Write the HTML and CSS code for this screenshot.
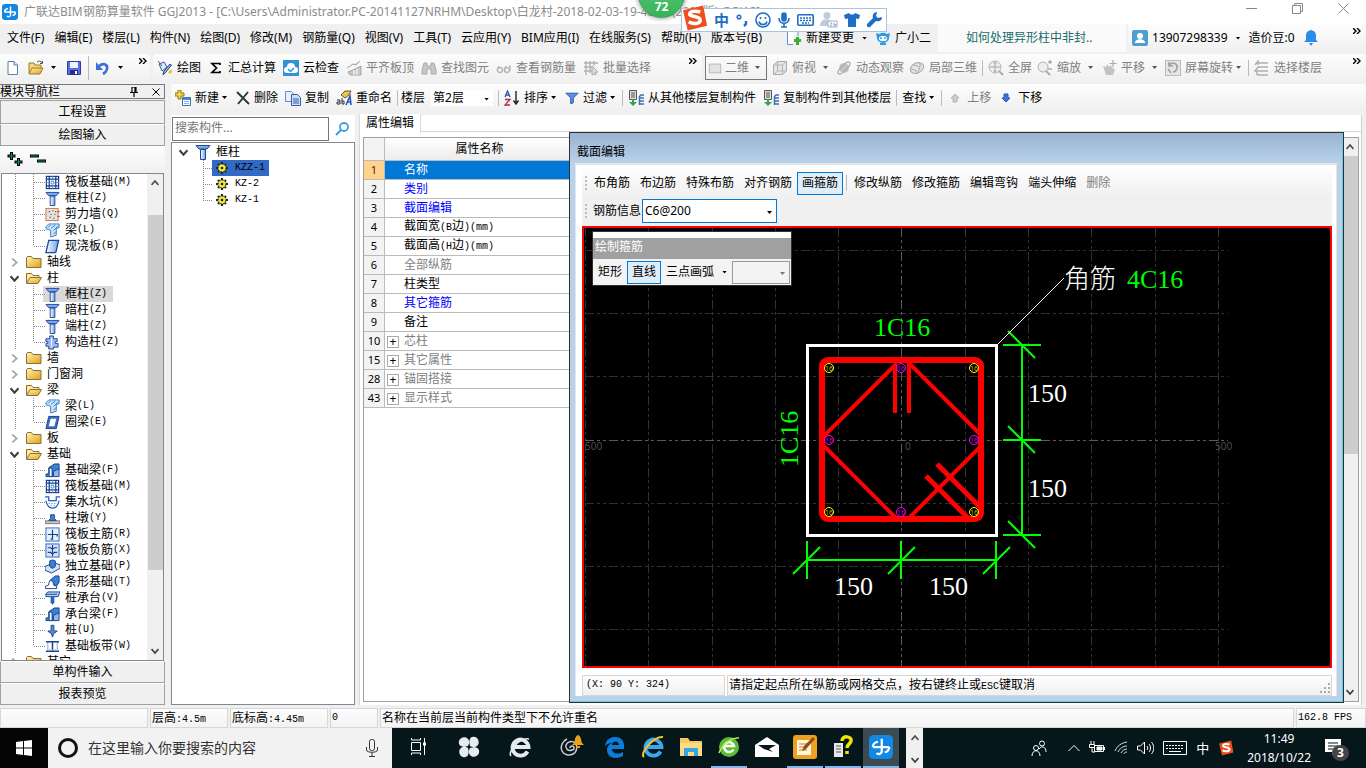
FILE: index.html
```
<!DOCTYPE html>
<html lang="zh-CN">
<head>
    <meta charset="UTF-8">
    <meta name="viewport" content="width=device-width, initial-scale=1.0">
    <title>广联达BIM钢筋算量软件 GGJ2013</title>
    <link rel="stylesheet" href="styles.css">
</head>
<body>
    <svg class="sprite" aria-hidden="true">
        <defs>
            <linearGradient id="g-gold" x1="0" y1="0" x2="1" y2="1"><stop offset="0" stop-color="#fff3b0"/><stop offset="1" stop-color="#e0a01c"/></linearGradient>
            <linearGradient id="g-blue" x1="0" y1="0" x2="1" y2="0"><stop offset="0" stop-color="#fff"/><stop offset="1" stop-color="#6f9fe8"/></linearGradient>
        </defs>
        <symbol id="i-app" viewBox="0 0 16 16"><rect width="16" height="16" rx="3" fill="#1088e4"/><path d="M8.500 2.500v8.500a2 2 0 0 1-3.500 1M2.500 8h11M6 4.500A4 4 0 0 0 2.500 8M13.500 8a3.500 3.500 0 0 1-3 3.500" fill="none" stroke="#fff" stroke-width="1.500"/></symbol>
        <symbol id="i-more" viewBox="0 0 8 6"><path d="M0 0l3 3-3 3M4 0l3 3-3 3" fill="none" stroke="#000" stroke-width="1.400"/></symbol>
        <symbol id="i-new" viewBox="0 0 16 16"><path d="M3 1.500h6l3.500 3.500v9.500H3z" fill="#fff" stroke="#5f7fb0"/><path d="M9 1.500V5h3.500" fill="#dbe6f8" stroke="#5f7fb0"/></symbol>
        <symbol id="i-open" viewBox="0 0 16 16"><path d="M1 13V3h5l1 2h6v3" fill="#f5d77a" stroke="#9a7a24"/><path d="M1 14l3-6h11l-3 6z" fill="url(#g-gold)" stroke="#9a7a24"/><path d="M9 2c2-1.500 4-1 5 1M14.500 1v2.500H12" fill="none" stroke="#555"/></symbol>
        <symbol id="i-save" viewBox="0 0 16 16"><path d="M1.500 1.500h13v13h-13z" fill="#5a6fe0" stroke="#2b3a9c"/><path d="M4 2h8v6H4z" fill="#eef3ff"/><path d="M4 10h8v5H4z" fill="#27308a"/><path d="M9 11h2v3H9z" fill="#fff"/></symbol>
        <symbol id="i-undo" viewBox="0 0 16 16"><path d="M4 6c5-4 9-1 8 3-.5 2-2 4-4 5" fill="none" stroke="#3d6fd6" stroke-width="2.600"/><path d="M1 2v8h7z" fill="#3d6fd6"/></symbol>
        <symbol id="i-draw" viewBox="0 0 16 16"><path d="M2 4l5-2 3 5-5 4z" fill="#dbe9fb" stroke="#395f95"/><path d="M1 1l4 5" stroke="#395f95"/><path d="M14.500 5L9 12l-3 3 1-4 6-7z" fill="#8fb0da" stroke="#2b4a7c"/><path d="M11 13c1-3 3-4 4-3 .5 2-1 5-4 3z" fill="#f0c23a"/></symbol>
        <symbol id="i-sum" viewBox="0 0 12 16"><path d="M10 5V3.500H2L6.500 8 2 12.500h8V11" fill="none" stroke="#000" stroke-width="1.700"/></symbol>
        <symbol id="i-cloud" viewBox="0 0 16 16"><rect width="16" height="16" fill="#2f93d8"/><path d="M4 13a3 3 0 0 1 0-6 4 4 0 0 1 8 0 3 3 0 0 1 0 6z" fill="#fff"/><path d="M5 9l2.500 2.500L11 8" fill="none" stroke="#2f93d8" stroke-width="1.500"/></symbol>
        <symbol id="i-align" viewBox="0 0 16 16"><path d="M1 8l6-4 3 1 4-4M2 12l7-3 6-3v9H4z" fill="#c9c9c9" stroke="#a5a5a5"/><path d="M8 10v5M11 9v6" stroke="#fff"/></symbol>
        <symbol id="i-find" viewBox="0 0 16 16"><path d="M3 3h3v3h4V3h3l2 7v4h-5V9H6v5H1v-4z" fill="#c6c6c6" stroke="#aaa"/></symbol>
        <symbol id="i-glass" viewBox="0 0 16 16"><path d="M1 11l2-5M8 11l2-5M14 5v6" stroke="#b5b5b5" stroke-width="1.300"/><circle cx="4" cy="10" r="2.500" fill="none" stroke="#b5b5b5" stroke-width="1.400"/><circle cx="11" cy="10" r="2.500" fill="none" stroke="#b5b5b5" stroke-width="1.400"/></symbol>
        <symbol id="i-batch" viewBox="0 0 16 16"><path d="M1 3h14M1 7h9M1 11h8M3 1v14M7 1v12M11 1v5" stroke="#b0b0b0" stroke-width="1.300"/><path d="M9 6l6 6-3 .5 1 2.500-2-1-2 1z" fill="#ddd" stroke="#aaa"/></symbol>
        <symbol id="i-flat" viewBox="0 0 16 16"><rect x="1.500" y="3.500" width="13" height="10" fill="#e3e3e3" stroke="#b4b4b4"/></symbol>
        <symbol id="i-cube" viewBox="0 0 16 16"><path d="M1.500 5l4-3.500h9V11l-4 3.500h-9z" fill="#e6e6e6" stroke="#aaa"/><path d="M1.500 5h9v9.500M10.500 5l4-3.500M5.500 2v9h9M5.500 11l-4 3.500" fill="none" stroke="#b4b4b4"/></symbol>
        <symbol id="i-orbit" viewBox="0 0 16 16"><circle cx="8" cy="8" r="5" fill="#c2c2c2"/><ellipse cx="8" cy="8" rx="8" ry="2.600" transform="rotate(-45 8 8)" fill="none" stroke="#aaa" stroke-width="1.300"/></symbol>
        <symbol id="i-part" viewBox="0 0 16 16"><ellipse cx="8" cy="8" rx="7" ry="5" transform="rotate(-25 8 8)" fill="#e4e4e4" stroke="#aaa"/><path d="M5 5l6 2-2 5M2 9l4 1 2 3M9 3l4 3" fill="none" stroke="#aaa"/></symbol>
        <symbol id="i-full" viewBox="0 0 16 16"><circle cx="7" cy="7" r="6" fill="#eee" stroke="#b0b0b0"/><path d="M7 2v10M2 7h10M5.500 3.500L7 2l1.500 1.500M5.500 10.500L7 12l1.500-1.500" fill="none" stroke="#a5a5a5"/><path d="M11 11l4 4" stroke="#aaa" stroke-width="2"/></symbol>
        <symbol id="i-zoom" viewBox="0 0 16 16"><circle cx="6" cy="7" r="5" fill="#eee" stroke="#b0b0b0"/><path d="M9 11l4 4" stroke="#aaa" stroke-width="2"/><path d="M11 2h4M13 0v4M11 9h4" stroke="#aaa" stroke-width="1.300"/></symbol>
        <symbol id="i-pan" viewBox="0 0 16 16"><path d="M2 6l3 1 1-3 2 3 2-2 1 3 3 1-2 6H5z" fill="#c2c2c2"/><path d="M12 0v7M8.500 3.500h7" stroke="#aaa" stroke-width="1.200"/></symbol>
        <symbol id="i-rot" viewBox="0 0 16 16"><rect x=".5" y=".5" width="15" height="15" fill="#e6e6e6" stroke="#bbb"/><path d="M4 5c4-4 9-1 8 3-.5 2-2 4-4 4M4 2v4h4M3 9l3 4" fill="none" stroke="#a2a2a2" stroke-width="1.700"/></symbol>
        <symbol id="i-floor" viewBox="0 0 16 16"><path d="M1 5l3-4v4M4 3h10M4 7h10M2 11h12M3 15h11M4 7l-3 4h2v4" fill="none" stroke="#b0b0b0" stroke-width="1.500"/></symbol>
        <symbol id="i-add" viewBox="0 0 16 16"><path d="M3 0h3v3h3v3H6v3H3V6H0V3h3z" fill="#f2d44c" stroke="#8d7514"/><path d="M7.500 7.500h8v8h-8z" fill="#fff" stroke="#4670b8"/><path d="M8 8h7v2H8z" fill="#4d86e0"/><path d="M9 11.500h5M9 13.500h5" stroke="#8fb0e8"/></symbol>
        <symbol id="i-del" viewBox="0 0 14 16"><path d="M1 2l12 12M12 2L2 14" stroke="#333" stroke-width="1.900"/></symbol>
        <symbol id="i-copy" viewBox="0 0 16 16"><path d="M.5 1.500h6l2 2v8h-8z" fill="#e9f0fd" stroke="#6d8cc4"/><path d="M6.500 4.500h6l3 3v8h-9z" fill="#cfdff9" stroke="#355ea8"/><path d="M8 9h6M8 11h6M8 13h6" stroke="#355ea8"/></symbol>
        <symbol id="i-ren" viewBox="0 0 16 16"><path d="M5 5l4-4h6l-2 4-4 3z" fill="#e8c25b" stroke="#6d5720"/><path d="M10 15l4-9 1 9M11 12h4" fill="none" stroke="#2459b8" stroke-width="1.600"/><path d="M1 10h3v4H1v-2h3M6 8v6h2v-3H6" fill="none" stroke="#333"/></symbol>
        <symbol id="i-sort" viewBox="0 0 16 16"><path d="M1 7l2.500-6L6 7M2 5h3" fill="none" stroke="#2d55a5" stroke-width="1.300"/><path d="M1 9.500h5L1 15h5" fill="none" stroke="#b03040" stroke-width="1.300"/><path d="M12 1v12M9.500 10.500L12 14l2.500-3.500" fill="none" stroke="#222" stroke-width="1.400"/></symbol>
        <symbol id="i-filter" viewBox="0 0 16 16"><path d="M1 2.500h14L9.500 8v5.500l-3 1V8z" fill="#5c8ee6" stroke="#2451a8"/></symbol>
        <symbol id="i-cpfl" viewBox="0 0 16 16"><path d="M1.500.5h7v9h-7z" fill="#ddd" stroke="#555"/><path d="M3 3h4M3 5h4M3 7h4" stroke="#555"/><path d="M16 5h-3l-2 2M16 8h-4M16 11h-4M16 14h-4M11.500 6v9" fill="none" stroke="#3f6fb5" stroke-width="1.500"/><path d="M4 9v3H1l4 4 4-4H6V9z" fill="#36a04c"/></symbol>
        <symbol id="i-up" viewBox="0 0 12 16"><path d="M6 4l4 4H8v4H4V8H2z" fill="#ccc" stroke="#b4b4b4"/></symbol>
        <symbol id="i-down" viewBox="0 0 12 16"><path d="M6 12L2 8h2V4h4v4h2z" fill="#3f74dd" stroke="#2852ab"/></symbol>
        <symbol id="i-doc" viewBox="0 0 16 16"><path d="M9 1.500H1.500v13H7M9 1.500h3V6" fill="#fff" stroke="#4f96d2"/><path d="M10 7h3v2h2v3h-2v3h-3v-3H8V9h2z" fill="#3fae2a"/></symbol>
        <symbol id="i-robot" viewBox="0 0 16 16"><path d="M1 3l3 1a7 6 0 0 1 8 0l3-1-1 5a6 5 0 0 1-12 0z" fill="#2c9be6"/><rect x="4" y="6" width="8" height="5" rx="2.500" fill="#fff"/><path d="M6 7v2M10 7v2" stroke="#2c9be6" stroke-width="1.400"/><path d="M5 14h6" stroke="#2c9be6" stroke-width="2"/></symbol>
        <symbol id="i-user" viewBox="0 0 16 16"><rect width="16" height="16" rx="2" fill="#4d9fd0"/><circle cx="8" cy="6" r="3" fill="#fff"/><path d="M3 13c0-5 10-5 10 0z" fill="#fff"/></symbol>
        <symbol id="i-bell" viewBox="0 0 14 16"><path d="M7 0c4 1 5 3 5 6v4l2 2H0l2-2V6c0-3 1-5 5-6zM5 13h4l-2 3z" fill="#2b8bea"/></symbol>
        <symbol id="i-loupe" viewBox="0 0 16 16"><circle cx="10" cy="6" r="4" fill="#fff" stroke="#3fa0e6" stroke-width="1.800"/><path d="M7 9l-5 5" stroke="#3fa0e6" stroke-width="2.200"/></symbol>
        <symbol id="i-pin" viewBox="0 0 8 10"><path d="M2 0h4v5M2 0v5M5 0v5M0 5.500h8M4 6v4" fill="none" stroke="#000" stroke-width="1.200"/></symbol>
        <symbol id="i-x" viewBox="0 0 8 8"><path d="M.5.5l7 7M7.500.5l-7 7" stroke="#000"/></symbol>
        <symbol id="i-plus2" viewBox="0 0 16 16"><path d="M4.500 1v8M.5 5h8M11.500 7v8M7.500 11h8" stroke="#000" stroke-width="3"/><path d="M4.500 2v6M1.500 5h6M11.500 8v6M8.500 11h6" stroke="#0b8a80" stroke-width="1"/></symbol>
        <symbol id="i-minus2" viewBox="0 0 16 16"><path d="M0 5h9M7 10h9" stroke="#000" stroke-width="3"/><path d="M1 5h7M8 10h7" stroke="#0b8a80"/></symbol>
        <symbol id="i-chev" viewBox="0 0 8 8"><path d="M.5 2l3.500 4 3.500-4" fill="none" stroke="#404040" stroke-width="1.800"/></symbol>
        <symbol id="i-chevr" viewBox="0 0 8 8"><path d="M2 .5L6 4 2 7.500" fill="none" stroke="#a6a6a6" stroke-width="1.500"/></symbol>
        <symbol id="i-chevu" viewBox="0 0 8 8"><path d="M.5 6L4 2l3.500 4" fill="none" stroke="#505050" stroke-width="1.800"/></symbol>
        <symbol id="i-dir" viewBox="0 0 16 14"><path d="M.5 12.500v-10l1-1h4l1.500 2h8v9z" fill="url(#g-gold)" stroke="#8d7030"/></symbol>
        <symbol id="i-diro" viewBox="0 0 16 14"><path d="M.5 12V2.500h5l1.500 2h6V7" fill="#fbe9a4" stroke="#8d7030"/><path d="M.5 12.500L4 6.500h11.500l-3.500 6z" fill="url(#g-gold)" stroke="#8d7030"/></symbol>
        <symbol id="i-col" viewBox="0 0 16 16"><path d="M1 1.500h14L12 5H4z" fill="#7ba7ec" stroke="#1c4896"/><path d="M5.500 5.500h5v10h-5z" fill="url(#g-blue)" stroke="#1c4896"/></symbol>
        <symbol id="i-raft" viewBox="0 0 16 16"><rect x="1.500" y="1.500" width="13" height="13" fill="#fff" stroke="#14428c" stroke-width="1.300"/><path d="M4.500 1v14M11.500 1v14M1 4.500h14M1 11.500h14" fill="none" stroke="#14428c" stroke-width="1.300"/><path d="M6.500 6.500h3v3h-3zM8 1v3M8 12v3M1 8h3M12 8h3" fill="none" stroke="#5a86cc"/></symbol>
        <symbol id="i-wall" viewBox="0 0 16 16"><rect x="1" y="1.500" width="13" height="13" fill="#e6dfdc" stroke="#c4764a"/><path d="M4 5h1M8 4h1M6 8h1M10 8h1M5 11h1M9 12h1M11 5h1" stroke="#333" stroke-width="1.300"/><path d="M13 5h3M13 10h3" stroke="#c0501c"/></symbol>
        <symbol id="i-beam" viewBox="0 0 16 16"><path d="M1 4l3-3h11v4l-3 1v7l-6 2V8L1 6z" fill="#cfe3fb" stroke="#2f7fc8"/><path d="M3 5l3-3M6 6l5-4M9 8l5-5M9 12l3-3" stroke="#2f7fc8"/></symbol>
        <symbol id="i-slab" viewBox="0 0 16 16"><path d="M4 1.500h10.500l-3 13H1z" fill="url(#g-blue)" stroke="#1c4896" stroke-width="1.400"/></symbol>
        <symbol id="i-ring" viewBox="0 0 16 16"><path d="M4 1.500h11l-3 13H1z" fill="#3b6fc4" stroke="#173c80"/><path d="M6 4h6l-2 8H4z" fill="#fff"/></symbol>
        <symbol id="i-con" viewBox="0 0 16 16"><path d="M5 1h4v3h4v3h-2v2h3v4H9v2H4v-3H1V9h2V7H1V4h4z" fill="#9bbcf0" stroke="#1c4896"/><path d="M7 3v10" stroke="#fff"/></symbol>
        <symbol id="i-fbeam" viewBox="0 0 16 16"><path d="M1 14.500V12l3-1V5l6-4h5v6l-6 2v5.500z" fill="#3d7fd0" stroke="#14428c"/><path d="M4.500 5.500h3v9h-3z" fill="#fff" stroke="#14428c"/><path d="M9 9l6-3v8.500H9z" fill="#8fb6ea" stroke="#14428c"/></symbol>
        <symbol id="i-pit" viewBox="0 0 16 16"><path d="M0 2h4v4h8V2h4M1 6c1 5 3 8 7 8s6-3 7-8" fill="none" stroke="#1f5cb4" stroke-width="1.300"/><path d="M4 9h1M7 9h1M10 9h1M6 11h1M9 11h1" stroke="#1f5cb4"/></symbol>
        <symbol id="i-pier" viewBox="0 0 16 16"><path d="M0 10.500h16v3H0z" fill="#c5c5c5" stroke="#777"/><path d="M4 10l2-2V4h4v4l2 2z" fill="#4b82dd" stroke="#14428c"/></symbol>
        <symbol id="i-mbar" viewBox="0 0 16 16"><rect x="1" y="1" width="14" height="14" fill="#e7f0ff" stroke="#2a62b8"/><path d="M8 3v10H6M3 8h10v2" fill="none" stroke="#14428c" stroke-width="1.300"/></symbol>
        <symbol id="i-nbar" viewBox="0 0 16 16"><rect x="1" y="1" width="14" height="14" fill="#d5e3fa" stroke="#2a62b8"/><path d="M8 2v12M3 5h3l1 1h2l1-1h3M3 10h3l1 1h2l1-1h3" fill="none" stroke="#14428c" stroke-width="1.200"/></symbol>
        <symbol id="i-iso" viewBox="0 0 16 16"><path d="M0 8l9-4 7 2v4l-9 5-7-3z" fill="#cfe0f8" stroke="#14428c"/><path d="M5 2l3-1 3 1v6l-3 2-3-2z" fill="#3d7fd0" stroke="#14428c"/></symbol>
        <symbol id="i-strip" viewBox="0 0 16 16"><path d="M6 8V5l5-4h4v7l-3 4z" fill="#3d7fd0" stroke="#14428c"/><path d="M.5 14.500V12l3-1 1.500-5h3l1.500 5 3 1v2.500z" fill="#fff" stroke="#14428c"/></symbol>
        <symbol id="i-cap" viewBox="0 0 16 16"><path d="M1 3l2-2h13l-2 5H1z" fill="#b9d2f6" stroke="#14428c"/><path d="M1 3.500h12" stroke="#14428c"/><path d="M6 6h4v6l-2 3-2-3z" fill="#2a62b8"/></symbol>
        <symbol id="i-pile" viewBox="0 0 16 16"><path d="M6.500 2.500h3v6h3.500l-2 2h-1.500L8 15l-1.500-4.500H5l-2-2h3.500z" fill="#5c8fdc" stroke="#14428c"/></symbol>
        <symbol id="i-band" viewBox="0 0 16 16"><path d="M1 3h14M1 13h14M8 3v10" stroke="#14428c" stroke-width="1.600"/><path d="M3 4v8M13 4v8" stroke="#14428c" stroke-dasharray="1 1"/><path d="M4 11h8v1H4z" fill="#a9c6f2"/></symbol>
        <symbol id="i-gear" viewBox="0 0 12 12"><path d="M6 0v12M0 6h12M2 2l8 8M10 2l-8 8" stroke="#222" stroke-width="2.200"/><circle cx="6" cy="6" r="4" fill="#f4e83a" stroke="#222" stroke-dasharray="2 1"/><circle cx="6" cy="6" r="1.300" fill="#222"/></symbol>
        <symbol id="i-e" viewBox="0 0 24 24"><path d="M19.500 16.500A8 8 0 1 1 20.500 12H6" fill="none" stroke="currentColor" stroke-width="3.800"/></symbol>
        <symbol id="i-sogou" viewBox="0 0 28 28"><path d="M2 6L23 1l4 21-20 5z" fill="#f04e1d"/><path d="M20 8c-5-2-11-1-11 2s11 2 11 6-7 5-12 2" fill="none" stroke="#fff" stroke-width="3.600"/></symbol>
    </svg>

    <div class="app">
        <header class="titlebar">
            <svg class="ico"><use href="#i-app"/></svg>
            <h1>广联达BIM钢筋算量软件 GGJ2013 - [C:\Users\Administrator.PC-20141127NRHM\Desktop\白龙村-2018-02-03-19-48-12(2000版).GGJ12]</h1>
            <div class="winbtns">
                <button aria-label="最小化"><svg width="11" height="11"><path d="M0 5.500h11" stroke="#888"/></svg></button>
                <button aria-label="还原"><svg width="11" height="11" fill="none" stroke="#888"><path d="M.5 2.500h8v8h-8zM2.500 2.500v-2h8v8h-2"/></svg></button>
                <button aria-label="关闭"><svg width="11" height="11" stroke="#888"><path d="M.5.5l10 10M10.500.5l-10 10"/></svg></button>
            </div>
        </header>

        <nav class="menubar">
            <button>文件(F)</button><button>编辑(E)</button><button>楼层(L)</button><button>构件(N)</button><button>绘图(D)</button><button>修改(M)</button><button>钢筋量(Q)</button><button>视图(V)</button><button>工具(T)</button><button>云应用(Y)</button><button>BIM应用(I)</button><button>在线服务(S)</button><button>帮助(H)</button><button>版本号(B)</button>
            <button class="tool"><svg class="ico"><use href="#i-doc"/></svg>新建变更<span class="arr"></span></button>
            <button class="tool"><svg class="ico"><use href="#i-robot"/></svg>广小二</button>
            <a class="tip" href="#">如何处理异形柱中非封..</a>
            <div class="account">
                <button class="tool"><svg class="ico"><use href="#i-user"/></svg>13907298339<span class="arr"></span></button>
                <button class="tool beans">造价豆:0<svg class="ico"><use href="#i-bell"/></svg></button>
                <svg class="more"><use href="#i-more"/></svg>
            </div>
        </nav>

        <div class="bars">
            <div class="bar bar-file">
                <button class="tool" aria-label="新建"><svg class="ico"><use href="#i-new"/></svg></button>
                <button class="tool" aria-label="打开"><svg class="ico"><use href="#i-open"/></svg><span class="arr"></span></button>
                <button class="tool" aria-label="保存"><svg class="ico"><use href="#i-save"/></svg></button>
                <span class="sep tall"></span>
                <button class="tool" aria-label="撤销"><svg class="ico"><use href="#i-undo"/></svg><span class="arr"></span></button>
                <svg class="more"><use href="#i-more"/></svg>
            </div>
            <div class="bar bar-draw">
                <button class="tool"><svg class="ico"><use href="#i-draw"/></svg>绘图</button>
                <button class="tool"><svg class="ico"><use href="#i-sum"/></svg>汇总计算</button>
                <button class="tool"><svg class="ico"><use href="#i-cloud"/></svg>云检查</button>
                <button class="tool off"><svg class="ico"><use href="#i-align"/></svg>平齐板顶</button>
                <button class="tool off"><svg class="ico"><use href="#i-find"/></svg>查找图元</button>
                <button class="tool off"><svg class="ico"><use href="#i-glass"/></svg>查看钢筋量</button>
                <button class="tool off"><svg class="ico"><use href="#i-batch"/></svg>批量选择</button>
                <svg class="more"><use href="#i-more"/></svg>
            </div>
            <div class="bar bar-view">
                <button class="tool off mode"><svg class="ico"><use href="#i-flat"/></svg>二维<span class="arr"></span></button>
                <button class="tool off"><svg class="ico"><use href="#i-cube"/></svg>俯视<span class="arr"></span></button>
                <button class="tool off"><svg class="ico"><use href="#i-orbit"/></svg>动态观察</button>
                <button class="tool off"><svg class="ico"><use href="#i-part"/></svg>局部三维</button>
                <span class="sep"></span>
                <button class="tool off"><svg class="ico"><use href="#i-full"/></svg>全屏</button>
                <button class="tool off"><svg class="ico"><use href="#i-zoom"/></svg>缩放<span class="arr"></span></button>
                <button class="tool off"><svg class="ico"><use href="#i-pan"/></svg>平移<span class="arr"></span></button>
                <button class="tool off"><svg class="ico"><use href="#i-rot"/></svg>屏幕旋转<span class="arr near"></span></button>
                <span class="sep"></span>
                <button class="tool off"><svg class="ico"><use href="#i-floor"/></svg>选择楼层</button>
                <svg class="more"><use href="#i-more"/></svg>
            </div>
        </div>

        <div class="main">
            <aside class="nav">
                <div class="nav-head"><h2>模块导航栏</h2><svg width="8" height="10"><use href="#i-pin"/></svg><svg width="8" height="8"><use href="#i-x"/></svg></div>
                <button class="page">工程设置</button>
                <button class="page">绘图输入</button>
                <div class="nav-tools">
                    <button aria-label="全部展开"><svg class="ico"><use href="#i-plus2"/></svg></button>
                    <button aria-label="全部折叠"><svg class="ico"><use href="#i-minus2"/></svg></button>
                </div>
                <div class="treebox">
                    <ul class="tree">
                        <li>
                            <ul class="sub">
                                <li><svg><use href="#i-raft"/></svg>筏板基础<span class="key">(M)</span></li>
                                <li><svg><use href="#i-col"/></svg>框柱<span class="key">(Z)</span></li>
                                <li><svg><use href="#i-wall"/></svg>剪力墙<span class="key">(Q)</span></li>
                                <li><svg><use href="#i-beam"/></svg>梁<span class="key">(L)</span></li>
                                <li><svg><use href="#i-slab"/></svg>现浇板<span class="key">(B)</span></li>
                            </ul>
                        </li>
                        <li><div class="group"><svg class="chev"><use href="#i-chevr"/></svg><svg class="dir"><use href="#i-dir"/></svg>轴线</div></li>
                        <li><div class="group"><svg class="chev"><use href="#i-chev"/></svg><svg class="dir"><use href="#i-diro"/></svg>柱</div>
                            <ul class="sub">
                                <li class="on"><svg><use href="#i-col"/></svg>框柱<span class="key">(Z)</span></li>
                                <li><svg><use href="#i-col"/></svg>暗柱<span class="key">(Z)</span></li>
                                <li><svg><use href="#i-col"/></svg>端柱<span class="key">(Z)</span></li>
                                <li><svg><use href="#i-con"/></svg>构造柱<span class="key">(Z)</span></li>
                            </ul>
                        </li>
                        <li><div class="group"><svg class="chev"><use href="#i-chevr"/></svg><svg class="dir"><use href="#i-dir"/></svg>墙</div></li>
                        <li><div class="group"><svg class="chev"><use href="#i-chevr"/></svg><svg class="dir"><use href="#i-dir"/></svg>门窗洞</div></li>
                        <li><div class="group"><svg class="chev"><use href="#i-chev"/></svg><svg class="dir"><use href="#i-diro"/></svg>梁</div>
                            <ul class="sub">
                                <li><svg><use href="#i-beam"/></svg>梁<span class="key">(L)</span></li>
                                <li><svg><use href="#i-ring"/></svg>圈梁<span class="key">(E)</span></li>
                            </ul>
                        </li>
                        <li><div class="group"><svg class="chev"><use href="#i-chevr"/></svg><svg class="dir"><use href="#i-dir"/></svg>板</div></li>
                        <li><div class="group"><svg class="chev"><use href="#i-chev"/></svg><svg class="dir"><use href="#i-diro"/></svg>基础</div>
                            <ul class="sub">
                                <li><svg><use href="#i-fbeam"/></svg>基础梁<span class="key">(F)</span></li>
                                <li><svg><use href="#i-raft"/></svg>筏板基础<span class="key">(M)</span></li>
                                <li><svg><use href="#i-pit"/></svg>集水坑<span class="key">(K)</span></li>
                                <li><svg><use href="#i-pier"/></svg>柱墩<span class="key">(Y)</span></li>
                                <li><svg><use href="#i-mbar"/></svg>筏板主筋<span class="key">(R)</span></li>
                                <li><svg><use href="#i-nbar"/></svg>筏板负筋<span class="key">(X)</span></li>
                                <li><svg><use href="#i-iso"/></svg>独立基础<span class="key">(P)</span></li>
                                <li><svg><use href="#i-strip"/></svg>条形基础<span class="key">(T)</span></li>
                                <li><svg><use href="#i-cap"/></svg>桩承台<span class="key">(V)</span></li>
                                <li><svg><use href="#i-fbeam"/></svg>承台梁<span class="key">(F)</span></li>
                                <li><svg><use href="#i-pile"/></svg>桩<span class="key">(U)</span></li>
                                <li><svg><use href="#i-band"/></svg>基础板带<span class="key">(W)</span></li>
                            </ul>
                        </li>
                        <li><div class="group"><svg class="chev"><use href="#i-chevr"/></svg><svg class="dir"><use href="#i-dir"/></svg>其它</div></li>
                    </ul>
                    <div class="scroll nav-scroll"><svg><use href="#i-chevu"/></svg><i></i><svg><use href="#i-chev"/></svg></div>
                </div>
                <button class="page">单构件输入</button>
                <button class="page">报表预览</button>
            </aside>

            <div class="work">
                <div class="bar bar-comp">
                    <button class="tool"><svg class="ico"><use href="#i-add"/></svg>新建<span class="arr near"></span></button>
                    <button class="tool"><svg class="ico slim"><use href="#i-del"/></svg>删除</button>
                    <button class="tool"><svg class="ico"><use href="#i-copy"/></svg>复制</button>
                    <button class="tool"><svg class="ico"><use href="#i-ren"/></svg>重命名</button>
                    <span class="sep"></span>
                    <label class="floor">楼层 <span class="combo"><select><option>第2层</option></select></span></label>
                    <span class="sep"></span>
                    <button class="tool"><svg class="ico"><use href="#i-sort"/></svg>排序<span class="arr near"></span></button>
                    <button class="tool"><svg class="ico slim"><use href="#i-filter"/></svg>过滤<span class="arr near"></span></button>
                    <span class="sep"></span>
                    <button class="tool"><svg class="ico"><use href="#i-cpfl"/></svg>从其他楼层复制构件</button>
                    <button class="tool"><svg class="ico"><use href="#i-cpfl"/></svg>复制构件到其他楼层</button>
                    <span class="sep"></span>
                    <button class="tool">查找<span class="arr near"></span></button>
                    <span class="sep"></span>
                    <button class="tool off"><svg class="ico"><use href="#i-up"/></svg>上移</button>
                    <button class="tool"><svg class="ico"><use href="#i-down"/></svg>下移</button>
                </div>
                <div class="panes">
                    <section class="comps">
                        <div class="search"><input type="text" placeholder="搜索构件..." aria-label="搜索构件"><button aria-label="搜索"><svg class="ico"><use href="#i-loupe"/></svg></button></div>
                        <div class="complist">
                            <div class="root"><svg class="chev"><use href="#i-chev"/></svg><svg class="ico"><use href="#i-col"/></svg>框柱</div>
                            <ul>
                                <li class="on"><span><svg><use href="#i-gear"/></svg>KZZ-1</span></li>
                                <li><span><svg><use href="#i-gear"/></svg>KZ-2</span></li>
                                <li><span><svg><use href="#i-gear"/></svg>KZ-1</span></li>
                            </ul>
                        </div>
                    </section>

                    <section class="props">
                        <div class="tabs"><button>属性编辑</button></div>
                        <div class="propbox">
                            <div class="grid">
                                <table>
                                    <thead><tr><th></th><th>属性名称</th><th></th></tr></thead>
                                    <tbody>
                                        <tr class="sel"><td>1</td><td>名称</td><td></td></tr>
                                        <tr class="blue"><td>2</td><td>类别</td><td></td></tr>
                                        <tr class="blue"><td>3</td><td>截面编辑</td><td></td></tr>
                                        <tr><td>4</td><td>截面宽<span class="key">(B</span>边<span class="key">)(mm)</span></td><td></td></tr>
                                        <tr><td>5</td><td>截面高<span class="key">(H</span>边<span class="key">)(mm)</span></td><td></td></tr>
                                        <tr class="gray"><td>6</td><td>全部纵筋</td><td></td></tr>
                                        <tr><td>7</td><td>柱类型</td><td></td></tr>
                                        <tr class="blue"><td>8</td><td>其它箍筋</td><td></td></tr>
                                        <tr><td>9</td><td>备注</td><td></td></tr>
                                        <tr class="gray fold"><td>10</td><td><button>+</button>芯柱</td><td></td></tr>
                                        <tr class="gray fold"><td>15</td><td><button>+</button>其它属性</td><td></td></tr>
                                        <tr class="gray fold"><td>28</td><td><button>+</button>锚固搭接</td><td></td></tr>
                                        <tr class="gray fold"><td>43</td><td><button>+</button>显示样式</td><td></td></tr>
                                    </tbody>
                                </table>
                                <div class="scroll prop-scroll"><svg><use href="#i-chevu"/></svg><i></i><svg><use href="#i-chev"/></svg></div>
                            </div>
                        </div>
                    </section>
                </div>

                <section class="dialog" role="dialog" aria-label="截面编辑">
                    <h2>截面编辑</h2>
                    <div class="dlg-body">
                        <div class="dlg-tools">
                            <div class="dlg-row"><span class="grip"></span><button>布角筋</button><button>布边筋</button><button>特殊布筋</button><button>对齐钢筋</button><button class="on">画箍筋</button><span class="sep"></span><button>修改纵筋</button><button>修改箍筋</button><button>编辑弯钩</button><button>端头伸缩</button><button class="off">删除</button></div>
                            <div class="dlg-row"><span class="grip"></span><label for="bar-info">钢筋信息</label><span class="combo info"><select id="bar-info"><option>C6@200</option></select></span></div>
                        </div>
                        <div class="canvas">
                            <svg class="drawing">
                                <g transform="translate(-584 -228)">
                                    <g class="gridlines">
                                        <path d="M585.500 228v440M648.500 228v440M712.500 228v440M775.500 228v440M838.500 228v440M965.500 228v440M1028.500 228v440M1091.500 228v440M1155.500 228v440M1218.500 228v440"/>
                                        <path d="M585 250.500h643M585 313.500h643M585 376.500h643M585 503.500h643M585 566.500h643M585 629.500h643"/>
                                        <path class="axis" d="M901.500 228v440M585 440.500h643"/>
                                    </g>
                                    <g class="scale"><text x="585" y="450">500</text><text x="905" y="450">0</text><text x="1215" y="450">500</text></g>
                                    <rect x="807.500" y="345.500" width="189" height="190" fill="none" stroke="#fff" stroke-width="3"/>
                                    <g fill="none" stroke="#f00">
                                        <rect x="822" y="360" width="159" height="159" rx="6" stroke-width="6"/>
                                        <path stroke-width="4" d="M824 436l71-71v48M909 413v-50l72 72M824 446l72 72M981 446l-72 72"/>
                                        <path stroke-width="5" d="M937 464l45 45M926 476l43 43"/>
                                    </g>
                                    <g class="bars-y"><circle cx="829" cy="368" r="4.500"/><circle cx="974" cy="368" r="4.500"/><circle cx="829" cy="512" r="4.500"/><circle cx="974" cy="512" r="4.500"/></g>
                                    <g class="bars-m"><circle cx="901" cy="368" r="4.500"/><circle cx="829" cy="440" r="4.500"/><circle cx="974" cy="440" r="4.500"/><circle cx="901" cy="512" r="4.500"/></g>
                                    <g class="barno yel"><text x="829" y="371">16</text><text x="974" y="371">16</text><text x="829" y="515">16</text><text x="974" y="515">16</text></g>
                                    <g class="barno mag"><text x="901" y="371">16</text><text x="829" y="443">16</text><text x="974" y="443">16</text><text x="901" y="515">16</text></g>
                                    <g stroke="#0f0" stroke-width="2" fill="none">
                                        <path d="M1022 345v190M1003 345h38M1003 440h38M1003 535h38M1008 331l27 27M1008 426l27 27M1008 521l27 27"/>
                                        <path d="M807 560h189M807 541v38M901 541v38M996 541v38M793 574l27-27M888 574l27-27M983 574l27-27"/>
                                    </g>
                                    <path d="M998 344l66-66" stroke="#fff"/>
                                    <g class="dim">
                                        <text x="1028" y="402">150</text><text x="1028" y="497">150</text><text x="834" y="595">150</text><text x="929" y="595">150</text><text x="1064" y="288">角筋</text>
                                    </g>
                                    <g class="dim green">
                                        <text x="1127" y="288">4C16</text><text x="874" y="336">1C16</text><text transform="translate(798 467) rotate(-90)">1C16</text>
                                    </g>
                                </g>
                            </svg>
                            <div class="palette">
                                <h3>绘制箍筋</h3>
                                <div class="pal-row"><button>矩形</button><button class="on">直线</button><button>三点画弧<span class="arr"></span></button><span class="combo arc"><select aria-label="弧参数"><option></option></select></span></div>
                            </div>
                        </div>
                        <div class="dlg-status"><span class="xy key">(X: 90 Y: 324)</span><span class="hint">请指定起点所在纵筋或网格交点，按右键终止或<span class="key">ESC</span>键取消<svg class="sizer" width="12" height="12"><path d="M9 1h2M5 5h2M9 5h2M1 9h2M5 9h2M9 9h2" stroke="#aaa" stroke-width="2"/></svg></span></div>
                    </div>
                </section>
            </div>
        </div>

        <footer class="status"><span class="s1"></span><span class="s2">层高<span class="key">:4.5m</span></span><span class="s3">底标高<span class="key">:4.45m</span></span><span class="s4 key">0</span><span class="s5">名称在当前层当前构件类型下不允许重名</span><span class="s6 key">162.8 FPS</span></footer>

        <div class="taskbar">
            <button class="start" aria-label="开始"><svg width="16" height="16" fill="#fff"><path d="M0 2l7-1v6.500H0zM8 1l8-1v7.500H8zM0 8.500h7V15l-7-1zM8 8.500h8V16l-8-1z"/></svg></button>
            <label class="cortana"><svg width="22" height="22"><circle cx="11" cy="11" r="8.500" fill="none" stroke="#111" stroke-width="3"/></svg><input type="text" placeholder="在这里输入你要搜索的内容" aria-label="搜索"><svg width="12" height="18" fill="none" stroke="#333"><rect x="3.500" y=".5" width="5" height="11" rx="2"/><path d="M.5 8v3c0 3 11 3 11 0V8M6 14v3M3 17.500h6"/></svg></label>
            <div class="apps wide">
                <button aria-label="任务视图"><svg width="18" height="18" fill="none" stroke="#fff"><path d="M2.500 4.500h9v8h-9zM2.500 0v2h9V0M2.500 17v-2h9v2M15.500 0v17"/><path d="M14 6h3" stroke-width="3"/></svg></button>
                <button aria-label="四叶草"><svg width="24" height="24" fill="#e6ebee"><path d="M11 11C4 13 1 10 2 6s7-5 9-2 1 5 0 7zM13 11c-2-7 1-10 5-9s5 7 2 9-5 1-7 0zM13 13c7-2 10 1 9 5s-7 5-9 2-1-5 0-7zM11 13c2 7-1 10-5 9s-5-7-2-9 5-1 7 0z"/></svg></button>
                <button class="white" aria-label="浏览器"><svg width="24" height="24"><use href="#i-e"/><path d="M3 21C-1 17 12 2 21 4" fill="none" stroke="#e6ebee" stroke-width="1.500"/></svg></button>
                <button aria-label="助手"><svg width="26" height="26"><path d="M12 14a2 2 0 1 1 2 2c-4 2-7-2-6-5s6-5 9-2 2 9-2 11-9 1-11-3 0-10 5-12" fill="none" stroke="#ccc" stroke-width="1.500"/><path d="M20 1c3 1 3 5 4 8l2 2H14l2-2c1-3 1-7 4-8zM18 12h4v2h-4z" fill="#e8a317"/></svg></button>
            </div>
            <div class="apps">
                <button class="edge" aria-label="Edge"><svg width="24" height="24"><path d="M2 11C3 4 8 2 12 2c6 0 10 4 9 12H9c0 5 7 6 11 3v4C13 25 4 23 4 15c0-4 3-6 5-7-3 0-5 1-7 3zm7-1h7c0-4-6-5-7 0z" fill="#0a7ddb"/></svg></button>
                <button class="ie" aria-label="IE"><svg width="24" height="24"><use href="#i-e"/><path d="M3 22C-2 18 13 1 22 2" fill="none" stroke="#f3c623" stroke-width="2"/></svg></button>
                <button aria-label="资源管理器"><svg width="22" height="20"><path d="M0 1h8l2 3h12v15H0z" fill="#f4ca5c"/><path d="M0 6h22v13H0z" fill="#fbdc83"/><path d="M4 19v-8h14v8h-4v-4H8v4z" fill="#35a4e0"/></svg></button>
                <button class="run" aria-label="360浏览器"><svg width="24" height="24"><circle cx="12" cy="12" r="10" fill="#58c030"/><path d="M16.500 14.500A5 5 0 1 1 17 11H8" fill="none" stroke="#fff" stroke-width="2.500"/><path d="M2 18C6 8 15 2 22 3" fill="none" stroke="#bdea6c" stroke-width="1.500"/></svg></button>
                <button aria-label="邮件"><svg width="24" height="20"><path d="M0 8l12-8 12 8v12H0z" fill="#fff"/><path d="M3 8h18l-7 4 4 3-9-3z" fill="#06151a"/></svg></button>
                <button class="run" aria-label="写字"><svg width="24" height="24"><rect width="24" height="24" rx="3" fill="#f0a020"/><path d="M4 5h14v15H4z" fill="#fff6de"/><path d="M6 9h8M6 12h6M6 15h8" stroke="#c07c20"/><path d="M9 16l2-5L20 2l2 2-9 10z" fill="#8d4c18"/></svg></button>
                <button class="run" aria-label="帮助"><svg width="24" height="24"><path d="M3 8h9v14H3z" fill="#e8e8e8"/><path d="M5 11h5M5 14h5M5 17h5" stroke="#555"/><path d="M11 6c0-6 10-5 9 0-.5 3-4 3-4 7M16 16v3" fill="none" stroke="#f2e300" stroke-width="3.500"/></svg></button>
                <button class="run active" aria-label="广联达"><svg width="24" height="24"><use href="#i-app"/></svg></button>
            </div>
            <div class="updown"><svg><use href="#i-chevu"/></svg><svg><use href="#i-chev"/></svg></div>
            <div class="tray">
                <svg width="16" height="16" fill="none" stroke="#fff"><circle cx="11" cy="3.500" r="2.500"/><circle cx="5" cy="8" r="2.500"/><path d="M1 16c0-7 8-7 8 0M8 9c3-4 7-2 7 3"/></svg>
                <svg width="12" height="8" fill="none" stroke="#fff"><path d="M.5 7L6 1.500 11.500 7"/></svg>
                <svg width="16" height="14" fill="none" stroke="#fff"><path d="M5.500 4.500h9v6h-9zM2 0v3M5 0v3M.5 3.500h5v3h-5zM3 7v4h3M15.500 6v3"/><path d="M8 6h5v3H8z" fill="#fff"/></svg>
                <svg width="14" height="14" fill="none" stroke="#ddd"><path d="M1 10C3 5 7 2 13 1M4 11c1-3 5-6 9-6M7 12c1-2 3-4 6-4M10 13c0-1 1-2 3-2"/></svg>
                <svg width="17" height="14" fill="none" stroke="#fff"><path d="M.5 5h3l4-4v12l-4-4h-3zM10 5c1 1 1 3 0 4M12 3c2 2 2 6 0 8M14.500 1c3 4 3 8 0 12"/></svg>
                <svg width="24" height="14" fill="none" stroke="#fff"><path d="M.5.500h23v13H.5z"/><path d="M3 4.500h18M3 7.500h18" stroke-dasharray="2 1"/><path d="M6 10.500h12"/></svg>
                <span class="ime">中</span>
                <svg width="16" height="18"><use href="#i-sogou"/></svg>
                <div class="clock"><time>11:49</time><time>2018/10/22</time></div>
                <div class="note"><svg width="18" height="18"><path d="M1 1h16v13h-5l-4 3v-3H1z" fill="#fff"/><path d="M4 5h10M4 8h10M4 11h6" stroke="#06151a"/></svg><b>3</b></div>
            </div>
        </div>
    </div>

    <div class="ball">72</div>
    <div class="imebar">
        <svg class="logo"><use href="#i-sogou"/></svg>
        <b>中</b>
        <svg width="14" height="14" fill="none" stroke="#1e6fc4" stroke-width="1.500"><circle cx="4" cy="4" r="1.800"/><path d="M11 8v2c0 2-1 2-2 3" stroke-width="2.500"/></svg>
        <svg width="16" height="16" fill="none" stroke="#1e6fc4" stroke-width="1.600"><circle cx="8" cy="8" r="7"/><path d="M5.500 5v2M10.500 5v2M4 9.500c1 4 7 4 8 0"/></svg>
        <svg width="14" height="16" fill="none" stroke="#1e6fc4" stroke-width="1.600"><rect x="5" y="1" width="4" height="8" rx="2" fill="#1e6fc4"/><path d="M2 6c0 7 10 7 10 0M7 12v3M4 15h6"/></svg>
        <svg width="17" height="12"><rect x=".8" y=".8" width="15.400" height="10.400" rx="1" fill="none" stroke="#1e6fc4" stroke-width="1.600"/><path d="M3 4h11M3 6.500h11M5 9h7" stroke="#1e6fc4" stroke-width="1.300" stroke-dasharray="2 1"/></svg>
        <svg width="18" height="16" fill="#bccbdd"><circle cx="7" cy="3.500" r="3.500"/><path d="M0 14c0-8 9-8 11-5v5z"/><path d="M8 9h9v6H8z" fill="#fff" stroke="#9eb2ca"/><path d="M10 11h2l-2 3h2M15 11h-1v3h2v-1.500h-2" fill="none" stroke="#9eb2ca"/></svg>
        <svg width="16" height="14" fill="#1e6fc4"><path d="M5 0c1 2 5 2 6 0l5 2-1 4-3-.5V14H4V5.500L1 6 0 2z"/></svg>
        <svg width="16" height="16" fill="#1e6fc4"><path d="M11 0l-1 4 2 2 4-1c0 4-3 5-6 4l-6 6c-2 1-4-1-3-3l6-6C6 3 8 0 11 0z"/></svg>
    </div>
</body>
</html>
```
FILE: styles.css
```
* {
    box-sizing: border-box;
}
body {
    margin: 0;
    background: #f0f0f0;
    color: #000;
    font: 12px/16px "Noto Sans", "Noto Sans CJK SC", sans-serif;
    overflow: hidden;
}
h1, h2, h3, ul {
    margin: 0;
    padding: 0;
    font-size: 12px;
    font-weight: normal;
    list-style: none;
}
button, input, select {
    margin: 0;
    padding: 0;
    border: 0;
    background: none;
    color: inherit;
    font: inherit;
    white-space: nowrap;
}
svg {
    flex: none;
}
.sprite {
    position: absolute;
    width: 0;
    height: 0;
}
.ico {
    width: 16px;
    height: 16px;
}
.slim {
    width: 14px;
}
.key {
    font-family: "Liberation Mono", monospace;
    font-size: 10px;
}
.app {
    display: flex;
    flex-direction: column;
    height: 100vh;
}

/* title and menu */
.titlebar {
    display: flex;
    align-items: center;
    gap: 6px;
    height: 24px;
    padding-left: 2px;
    background: #fff;
    color: #8c8c8c;
}
.titlebar h1 {
    flex: 1;
    white-space: nowrap;
    overflow: hidden;
}
.winbtns {
    display: flex;
    padding-bottom: 4px;
}
.winbtns button {
    width: 46px;
}
.menubar {
    display: flex;
    align-items: center;
    gap: 10px;
    height: 28px;
    padding-left: 7px;
    white-space: nowrap;
}
.tool {
    display: flex;
    align-items: center;
    gap: 4px;
}
.off {
    color: #808080;
}
.arr {
    width: 5px;
    height: 3px;
    margin: 0 4px 0 4px;
    background: #000;
    clip-path: polygon(0 0, 100% 0, 50% 100%);
}
.off .arr {
    background: #555;
}
.menubar > .tool {
    margin-left: 14px;
    margin-right: -14px;
}
.menubar > .tool .arr {
    margin-right: -2px;
}
.tip {
    flex: 1;
    max-width: 188px;
    height: 28px;
    margin-left: 11px;
    padding-left: 28px;
    background: #fafafa;
    line-height: 28px;
    color: #176b6b;
    text-decoration: none;
}
.account {
    display: flex;
    flex: 1;
    align-items: center;
    gap: 4px;
    height: 28px;
    margin-left: -8px;
    padding-left: 4px;
    background: linear-gradient(#fdfdfd, #f0f0f0);
}
.beans {
    gap: 8px;
}
.more {
    width: 8px;
    height: 6px;
    margin: 0 5px 14px auto;
}

/* toolbars */
.bars {
    display: flex;
    gap: 3px;
    padding: 2px 0 3px;
}
.bar {
    display: flex;
    align-items: center;
    gap: 7px;
    height: 27px;
    background: linear-gradient(#fdfdfd, #f0f0f0);
    border-radius: 3px;
    white-space: nowrap;
}
.bar-file {
    width: 150px;
    padding-left: 5px;
}
.bar-draw {
    width: 549px;
    padding-left: 4px;
}
.bar-view {
    flex: 1;
    gap: 5px;
}
.bar-file .more {
    margin-right: 3px;
}
.bar-file .arr, .bar-view .arr {
    margin: 0 3px;
}
.bar .near {
    margin: 0 2px 0 -1px;
}
.sep {
    width: 1px;
    height: 16px;
    background: #bbb;
}
.sep.tall {
    height: 24px;
    margin: 0 -1px;
}
.mode {
    width: 62px;
    height: 24px;
    gap: 3px;
    padding-left: 2px;
    border: 1px solid #777;
}
.mode .ico {
    width: 14px;
}
.main {
    display: flex;
    flex: 1;
    min-height: 0;
    gap: 6px;
}

/* module navigation */
.nav {
    display: flex;
    flex-direction: column;
    width: 165px;
    padding-bottom: 2px;
}
.nav-head {
    display: flex;
    align-items: center;
    gap: 14px;
    height: 15px;
    padding-right: 4px;
    border: 1px solid #777;
    border-left: 0;
}
.nav-head h2 {
    flex: 1;
    line-height: 13px;
}
.page {
    height: 22px;
    border: 1px solid #a0a0a0;
    border-top-color: #fff;
}
.nav-head + .page {
    height: 24px;
    border-top: 1px solid #a0a0a0;
    margin-top: 1px;
}
.nav-tools {
    display: flex;
    gap: 6px;
    height: 27px;
    padding: 5px 6px;
    background: linear-gradient(#fdfdfd, #f0f0f0);
}
.nav-tools button {
    width: 17px;
    height: 17px;
}
.treebox {
    display: flex;
    flex: 1;
    min-height: 0;
    margin: 0 1px;
    border: 1px solid #828790;
    background: #fff;
    overflow: hidden;
}
.tree {
    flex: 1;
    white-space: nowrap;
    overflow: hidden;
}
.sub {
    margin-left: 13px;
    padding-left: 18px;
    background: repeating-linear-gradient(#888 0 1px, transparent 1px 2px) 0 0 / 1px 100% no-repeat;
}
.sub li {
    display: flex;
    align-items: center;
    height: 16px;
    padding-left: 1px;
    background: repeating-linear-gradient(#888 0 1px, transparent 1px 2px) 0 0 / 1px 100% no-repeat;
}
.sub li:last-child {
    background-size: 1px 8px;
}
.sub li::before {
    content: "";
    width: 11px;
    border-top: 1px dotted #888;
}
.sub svg {
    width: 15px;
    height: 15px;
    margin-right: 5px;
}
.sub .on {
    width: 80px;
    background: repeating-linear-gradient(#888 0 1px, transparent 1px 2px) 0 0 / 1px 100% no-repeat, linear-gradient(#d9d9d9, #d9d9d9) 10px 0 no-repeat;
}
.group {
    display: flex;
    align-items: center;
    height: 16px;
    padding-left: 8px;
}
.chev {
    width: 9px;
    height: 9px;
}
.dir {
    width: 16px;
    height: 14px;
    margin: 0 5px 0 7px;
}
.scroll {
    display: flex;
    flex-direction: column;
    align-items: center;
    width: 16px;
    background: #f0f0f0;
}
.scroll svg {
    width: 8px;
    height: 8px;
    margin: 5px 0;
}
.scroll i {
    width: 15px;
    background: #cdcdcd;
}
.scroll svg:last-child {
    margin-top: auto;
}
.nav-scroll i {
    height: 73%;
    margin-top: 23px;
}
.prop-scroll i {
    height: 53%;
}

/* components and properties */
.work {
    position: relative;
    display: flex;
    flex: 1;
    flex-direction: column;
    min-width: 0;
}
.bar-comp {
    padding-left: 4px;
}
.bar-comp .sep {
    margin: 0 -2px;
}
.floor {
    display: flex;
    gap: 6px;
    margin-left: -2px;
}
.combo {
    position: relative;
    display: flex;
    background: #fff;
}
.combo::after {
    content: "";
    position: absolute;
    right: 4px;
    top: 50%;
    width: 5px;
    height: 3px;
    background: #000;
    clip-path: polygon(0 0, 100% 0, 50% 100%);
}
.combo select {
    width: 100%;
    appearance: none;
    padding-left: 2px;
}
.floor .combo {
    width: 62px;
}
.panes {
    display: flex;
    flex: 1;
    gap: 4px;
    min-height: 0;
    padding: 4px 4px 2px 0;
}
.comps {
    display: flex;
    flex-direction: column;
    width: 184px;
}
.search {
    display: flex;
    height: 27px;
    padding: 2px 1px;
    background: #fff;
}
.search input {
    width: 157px;
    height: 24px;
    padding-left: 2px;
    padding-bottom: 3px;
    border: 1px solid #777;
}
.search input::placeholder, .cortana input::placeholder {
    color: #777;
    opacity: 1;
}
.search button {
    flex: 1;
    height: 24px;
    line-height: 0;
}
.complist {
    flex: 1;
    padding-top: 1px;
    border: 1px solid #828790;
    background: #fff;
}
.root {
    display: flex;
    align-items: center;
    height: 16px;
    padding-left: 7px;
}
.root .ico {
    margin: 0 5px 0 7px;
}
.complist ul {
    margin-left: 31px;
}
.complist li {
    display: flex;
    align-items: center;
    height: 16px;
    background: repeating-linear-gradient(#888 0 1px, transparent 1px 2px) 0 0 / 1px 100% no-repeat;
    font: 10px/16px "Liberation Mono", monospace;
}
.complist li:last-child {
    background-size: 1px 8px;
}
.complist li::before {
    content: "";
    width: 9px;
    border-top: 1px dotted #888;
}
.complist span {
    display: flex;
    align-items: center;
    height: 16px;
    padding: 0 4px;
}
.complist .on span {
    background: #316ac5;
}
.complist li svg {
    width: 12px;
    height: 12px;
    margin-right: 7px;
}
.props {
    display: flex;
    flex: 1;
    flex-direction: column;
    min-width: 0;
    background: #fff;
    border-right: 1px solid #d0d0d0;
}
.tabs {
    height: 17px;
    border-bottom: 1px solid #d9d9d9;
}
.tabs button {
    height: 19px;
    padding: 0 6px;
    border: 1px solid #d9d9d9;
    border-width: 0 1px 0 1px;
    margin-top: -2px;
    background: #fff;
}
.propbox {
    display: flex;
    flex: 1;
    min-height: 0;
    padding: 5px 2px 3px 3px;
    border-left: 1px solid #d9d9d9;
}
.grid {
    display: flex;
    flex: 1;
    align-items: flex-start;
    border: 1px solid #a0a0a0;
}
.grid .scroll {
    align-self: stretch;
    margin-left: auto;
}
table {
    flex: 1;
    border-collapse: separate;
    border-spacing: 0;
    table-layout: fixed;
}
th, td {
    height: 19px;
    padding: 0 0 0 19px;
    border-right: 1px solid #bbb;
    border-bottom: 1px solid #bbb;
    font-weight: normal;
    line-height: 16px;
}
th {
    height: 23px;
    padding: 0;
    background: linear-gradient(#fff, #ececec);
}
th:nth-child(2) {
    width: 190px;
}
td:first-child, th:first-child {
    width: 21px;
    padding: 0;
    background: #f3f3f3;
    text-align: center;
    font-size: 11px;
}
.sel td {
    background: #0078d7;
    color: #fff;
}
.sel td:first-child {
    background: #ffd48a;
    color: #5a0a4a;
}
.blue td:nth-child(2) {
    color: #00f;
}
.gray td:nth-child(2) {
    color: #808080;
}
.fold td:nth-child(2) {
    padding-left: 2px;
}
.fold button {
    width: 12px;
    height: 12px;
    margin-right: 5px;
    border: 1px solid #aaa;
    background: #fff;
    color: #000;
    line-height: 9px;
    vertical-align: -1px;
}

/* section editor window */
.dialog {
    position: absolute;
    left: 398px;
    right: 22px;
    top: 48px;
    bottom: 4px;
    display: flex;
    flex-direction: column;
    padding: 1px 6px 6px 5px;
    border: 1px solid #303030;
    background: linear-gradient(#99b4d1, #b9d1ea 30px);
    box-shadow: inset -1px -1px #5bd0ee;
}
.dialog h2 {
    height: 29px;
    padding: 10px 0 0 2px;
}
.dlg-body {
    display: flex;
    flex: 1;
    flex-direction: column;
    min-height: 0;
    padding: 4px 4px 0 6px;
    border: 1px solid #e6e6e6;
    border-width: 2px 1px 0;
    background: #fff;
}
.dlg-tools {
    height: 57px;
    background: linear-gradient(#fdfdfd, #f0f0f0 28px);
}
.dlg-row {
    display: flex;
    align-items: center;
    height: 28px;
}
.dlg-row button {
    height: 23px;
    padding: 0 4px;
    border: 1px solid transparent;
}
.dlg-row .on, .pal-row .on {
    border: 1px solid #0078d7;
    background: #e0eef9;
}
.dlg-row .sep {
    margin: 0 2px 0 3px;
}
.grip {
    width: 2px;
    height: 14px;
    margin: 0 2px 0 3px;
    background: repeating-linear-gradient(#bbb 0 2px, transparent 2px 4px);
}
label {
    white-space: nowrap;
}
.dlg-row label {
    padding: 0 1px 0 4px;
}
.info {
    width: 135px;
    height: 24px;
    border: 1px solid #0078d7;
}
.canvas {
    position: relative;
    flex: 1;
    min-height: 0;
    border: 2px solid #f00;
    background: #000;
}
.drawing {
    display: block;
    width: 100%;
    height: 100%;
}
.gridlines {
    fill: none;
    stroke: #303030;
    stroke-dasharray: 9 3 3 3 3 3;
}
.axis {
    stroke: #5a5a5a;
}
.scale {
    fill: #4a4a4a;
    font-size: 10px;
}
.dim {
    fill: #fff;
    font: 300 26px "Liberation Serif", "Noto Sans CJK SC", serif;
}
.green {
    fill: #0f0;
}
.bars-y, .bars-m {
    fill: #000;
    stroke: #ff0;
}
.bars-m {
    stroke: #f0f;
}
.barno {
    font-size: 7px;
    text-anchor: middle;
}
.yel {
    fill: #c8b400;
}
.mag {
    fill: #c000c0;
}
.palette {
    position: absolute;
    left: 8px;
    top: 3px;
    width: 200px;
    padding-top: 6px;
    border: 1px solid #303030;
    background: #fff;
}
.palette h3 {
    height: 21px;
    padding: 1px 2px;
    background: #a0a0a0;
    color: #fff;
}
.pal-row {
    display: flex;
    align-items: center;
    height: 26px;
    padding: 0 1px 0 0;
    background: #f3f3f3;
}
.pal-row button {
    display: flex;
    align-items: center;
    height: 23px;
    padding: 0 4px;
    border: 1px solid transparent;
}
.pal-row .arr {
    margin: 0 0 0 8px;
}
.arc {
    flex: 1;
    height: 23px;
    border: 1px solid #999;
    background: #f3f3f3;
}
.arc::after {
    background: #777;
}
.dlg-status {
    display: flex;
    gap: 2px;
    height: 28px;
    padding-top: 7px;
}
.dlg-status > span {
    padding-left: 3px;
    border: 1px solid #d6d6d6;
    background: linear-gradient(#fff, #f0f0f0);
    line-height: 18px;
}
.dlg-status .xy {
    width: 143px;
}
.dlg-status .hint {
    flex: 1;
    padding-left: 1px;
}
.sizer {
    float: right;
    margin-top: 7px;
}

/* status line */
.status {
    display: flex;
    gap: 2px;
    height: 21px;
    padding-top: 1px;
    background: #f0f0f0;
    white-space: nowrap;
}
.status > span {
    padding-left: 1px;
    border: 1px solid #d6d6d6;
    background: linear-gradient(#fdfdfd, #f3f3f3);
    line-height: 18px;
}
.s1 {
    width: 148px;
}
.s2 {
    width: 78px;
}
.s3 {
    width: 98px;
}
.s4 {
    width: 48px;
}
.s5 {
    flex: 1;
}
.s6 {
    width: 70px;
}

/* taskbar */
.taskbar {
    display: flex;
    height: 40px;
    background: #06171c;
    color: #fff;
}
.start {
    width: 48px;
    background: #050505;
    line-height: 0;
}
.cortana {
    display: flex;
    align-items: center;
    gap: 9px;
    width: 344px;
    padding: 0 14px 0 9px;
    background: #f2f2f2;
}
.cortana input {
    flex: 1;
    font-size: 14px;
}
.cortana input::placeholder {
    color: #333;
}
.apps {
    display: flex;
}
.apps button {
    display: flex;
    align-items: center;
    justify-content: center;
    width: 38px;
    border-bottom: 2px solid transparent;
}
.wide button {
    width: 51px;
}
.apps .run {
    border-color: #7db8f0;
    background-clip: padding-box;
    width: 36px;
    margin: 0 1px;
}
.apps .active {
    background: #3c4b52;
}
.white {
    color: #e6ebee;
}
.ie {
    color: #3ba7ee;
}
.updown {
    display: flex;
    flex-direction: column;
    align-items: center;
    justify-content: space-between;
    width: 17px;
    margin-left: 6px;
    padding: 6px 0 4px;
    background: #f0f0f0;
}
.updown svg {
    width: 8px;
    height: 8px;
}
.tray {
    display: flex;
    align-items: center;
    gap: 9px;
    margin-left: auto;
    padding-right: 16px;
}
.tray > svg:first-child {
    margin-right: 12px;
}
.ime {
    font-size: 13px;
}
.clock {
    display: flex;
    flex-direction: column;
    align-items: center;
    line-height: 19px;
    margin-left: 4px;
}
.note {
    position: relative;
    width: 26px;
    height: 20px;
    margin-left: 4px;
}
.note b {
    position: absolute;
    left: 8px;
    top: 7px;
    width: 17px;
    border-radius: 50%;
    background: #444;
    text-align: center;
}

/* floating desktop widgets */
.ball {
    position: absolute;
    left: 638px;
    top: -29px;
    width: 47px;
    height: 47px;
    border: 1px solid #3d9c58;
    border-radius: 50%;
    background: linear-gradient(#5fd07f, #35b356);
    box-shadow: 0 0 5px #777;
    color: #fff;
    font-weight: bold;
    line-height: 70px;
    text-align: center;
}
.imebar {
    position: absolute;
    left: 681px;
    top: 8px;
    display: flex;
    align-items: center;
    gap: 6px;
    height: 24px;
    padding-right: 4px;
    border: 1px solid #a9c3e2;
    background: #fff;
    color: #1e6fc4;
}
.imebar b {
    font-size: 15px;
}
.logo {
    width: 27px;
    height: 28px;
    margin-top: -4px;
    margin-left: -1px;
}
```
